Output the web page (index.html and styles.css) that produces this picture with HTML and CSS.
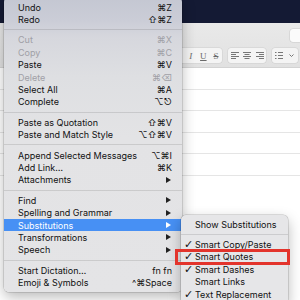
FILE: index.html
```html
<!DOCTYPE html>
<html lang="en">
<head>
    <meta charset="UTF-8">
    <title>Mail Edit Menu</title>
    <link rel="stylesheet" href="styles.css">
</head>
<body>
    <div class="window">
        <div class="titlebar"></div>
        <div class="toolbar">
            <div class="toolbar-row"><span class="tb-btn"></span></div>
            <div class="format-bar">
                <div class="seg">
                    <span class="fmt-b">B</span>
                    <span class="fmt-i">I</span>
                    <span class="fmt-u">U</span>
                    <span class="fmt-s">S</span>
                </div>
                <div class="seg">
                    <span><svg width="8" height="7" viewBox="0 0 8 7"><path d="M0 .5h8M0 2.5h5M0 4.5h8M0 6.5h5" stroke="#777" stroke-width="1"/></svg></span>
                    <span><svg width="8" height="7" viewBox="0 0 8 7"><path d="M0 .5h8M1.5 2.5h5M0 4.5h8M1.5 6.5h5" stroke="#777" stroke-width="1"/></svg></span>
                    <span><svg width="8" height="7" viewBox="0 0 8 7"><path d="M0 .5h8M3 2.5h5M0 4.5h8M3 6.5h5" stroke="#777" stroke-width="1"/></svg></span>
                </div>
                <div class="seg seg-list">
                    <span><svg width="8" height="7" viewBox="0 0 8 7"><path d="M0 .5h1.5M3 .5h5M0 3.5h1.5M3 3.5h5M0 6.5h1.5M3 6.5h5" stroke="#777" stroke-width="1"/></svg></span>
                    <span><svg width="5" height="3" viewBox="0 0 5 3"><path d="M.5 .5l2 2 2-2" fill="none" stroke="#777" stroke-width="1"/></svg></span>
                </div>
            </div>
        </div>
        <div class="fields">
            <div class="field"></div>
            <div class="field"></div>
            <div class="field"></div>
            <div class="field"></div>
            <div class="field"></div>
        </div>
    </div>

    <div class="menu main-menu">
        <div class="item"><span class="mark"></span><span class="label">Undo</span><span class="key">⌘Z</span></div>
        <div class="item"><span class="mark"></span><span class="label">Redo</span><span class="key">⇧⌘Z</span></div>
        <div class="sep"></div>
        <div class="item disabled"><span class="mark"></span><span class="label">Cut</span><span class="key">⌘X</span></div>
        <div class="item disabled"><span class="mark"></span><span class="label">Copy</span><span class="key">⌘C</span></div>
        <div class="item"><span class="mark"></span><span class="label">Paste</span><span class="key">⌘V</span></div>
        <div class="item disabled"><span class="mark"></span><span class="label">Delete</span><span class="key">⌘⌫</span></div>
        <div class="item"><span class="mark"></span><span class="label">Select All</span><span class="key">⌘A</span></div>
        <div class="item"><span class="mark"></span><span class="label">Complete</span><span class="key">⌥⎋</span></div>
        <div class="sep"></div>
        <div class="item"><span class="mark"></span><span class="label">Paste as Quotation</span><span class="key">⇧⌘V</span></div>
        <div class="item"><span class="mark"></span><span class="label">Paste and Match Style</span><span class="key">⌥⇧⌘V</span></div>
        <div class="sep"></div>
        <div class="item"><span class="mark"></span><span class="label">Append Selected Messages</span><span class="key">⌥⌘I</span></div>
        <div class="item"><span class="mark"></span><span class="label">Add Link…</span><span class="key">⌘K</span></div>
        <div class="item"><span class="mark"></span><span class="label">Attachments</span><span class="arrow"></span></div>
        <div class="sep"></div>
        <div class="item"><span class="mark"></span><span class="label">Find</span><span class="arrow"></span></div>
        <div class="item"><span class="mark"></span><span class="label">Spelling and Grammar</span><span class="arrow"></span></div>
        <div class="item active"><span class="mark"></span><span class="label">Substitutions</span><span class="arrow"></span></div>
        <div class="item"><span class="mark"></span><span class="label">Transformations</span><span class="arrow"></span></div>
        <div class="item"><span class="mark"></span><span class="label">Speech</span><span class="arrow"></span></div>
        <div class="sep"></div>
        <div class="item"><span class="mark"></span><span class="label">Start Dictation…</span><span class="key">fn fn</span></div>
        <div class="item"><span class="mark"></span><span class="label">Emoji &amp; Symbols</span><span class="key">^⌘Space</span></div>
    </div>

    <div class="menu submenu">
        <div class="item"><span class="mark"></span><span class="label">Show Substitutions</span></div>
        <div class="sep"></div>
        <div class="item"><span class="mark">✓</span><span class="label">Smart Copy/Paste</span></div>
        <div class="item"><span class="mark">✓</span><span class="label">Smart Quotes</span></div>
        <div class="item"><span class="mark">✓</span><span class="label">Smart Dashes</span></div>
        <div class="item"><span class="mark"></span><span class="label">Smart Links</span></div>
        <div class="item"><span class="mark">✓</span><span class="label">Text Replacement</span></div>
    </div>

    <div class="callout"></div>
</body>
</html>
```

FILE: styles.css
```css
* {
    box-sizing: border-box;
}
body {
    margin: 0;
    width: 300px;
    height: 300px;
    overflow: hidden;
    position: relative;
    background-color: #fff;
    font-family: 'Inter', 'DejaVu Sans', sans-serif;
}
.titlebar {
    height: 23px;
    background-color: #141a34;
}
.toolbar {
    height: 45px;
    background: linear-gradient(#e9e9e9, #e1e1e1);
    border-bottom: 1px solid #d3d3d3;
    display: flex;
    flex-direction: column;
    justify-content: space-between;
    padding: 6px 2px 4px 0;
}
.toolbar-row {
    display: flex;
    justify-content: flex-end;
}
.tb-btn {
    width: 20px;
    height: 13px;
    margin-right: -12px;
    background-color: #fbfbfb;
    border-radius: 3px;
    box-shadow: 0 0 0 0.5px #c9c9c9;
}
.format-bar {
    display: flex;
    justify-content: flex-end;
    gap: 6px;
}
.seg {
    display: flex;
    height: 15px;
    background-color: #f4f4f4;
    border-radius: 3px;
    box-shadow: 0 0 0 0.5px #cdcdcd;
}
.seg span {
    width: 12.6px;
    display: flex;
    align-items: center;
    justify-content: center;
    font-size: 9px;
    color: #6a6a6a;
    font-family: 'Liberation Serif', serif;
}
.seg-list span {
    width: 13px;
}
.fmt-b {
    font-weight: bold;
}
.fmt-i {
    font-style: italic;
}
.fmt-u {
    text-decoration: underline;
}
.fmt-s {
    text-decoration: line-through;
}
.field {
    height: 21.6px;
    border-bottom: 1px solid #e5e5e5;
}

/* menus */
.menu {
    position: absolute;
    background-color: #e4e4e6;
    border-radius: 5px;
    box-shadow: 0 0 0 0.5px rgba(0, 0, 0, 0.22), 0 5px 14px rgba(0, 0, 0, 0.28);
    font-size: 9px;
    color: #111;
}
.main-menu {
    left: 4px;
    top: -3px;
    width: 178px;
    padding: 4px 0 3px;
    background: linear-gradient(#c4c7d2 0px, #cbcdd7 24px, #d6d7dd 40px, #dedfe2 80px, #e3e3e5 140px, #e4e4e6 100%);
}
.submenu {
    left: 181px;
    top: 215px;
    width: 107px;
    padding: 3px 0 4px;
    background-color: #e6e6e8;
}
.item {
    display: flex;
    align-items: center;
    height: 12.4px;
    padding-right: 10px;
    white-space: nowrap;
}
.mark {
    width: 14px;
    flex: none;
    padding-left: 3px;
    font-family: 'DejaVu Sans', sans-serif;
    font-size: 11px;
    line-height: 1;
}
.label {
    flex: 1;
}
.disabled {
    color: #a0a0a6;
}
.active {
    background-color: #4790f4;
    color: #fff;
}
.arrow {
    width: 0;
    height: 0;
    margin-right: 1px;
    border-left: 5px solid #222;
    border-top: 3px solid transparent;
    border-bottom: 3px solid transparent;
}
.active .arrow {
    border-left-color: #fff;
}
.sep {
    height: 8px;
    display: flex;
    align-items: center;
}
.sep::after {
    content: "";
    flex: 1;
    height: 1px;
    background-color: rgba(0, 0, 0, 0.11);
}
.callout {
    position: absolute;
    left: 175px;
    top: 249px;
    width: 115px;
    height: 16px;
    border: 3px solid #e3342c;
}
```
